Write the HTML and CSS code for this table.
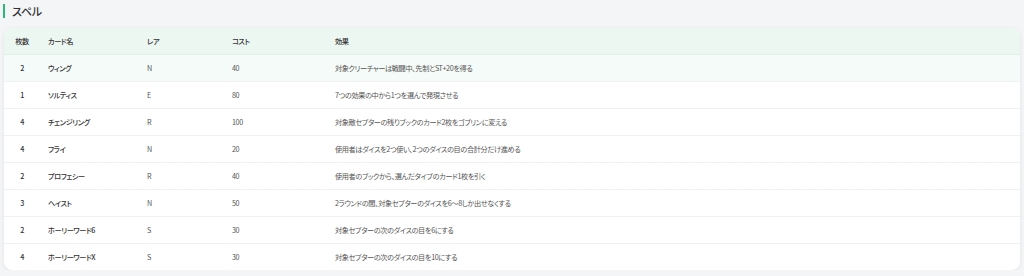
FILE: index.html
```html
<!DOCTYPE html>
<html lang="ja">
<head>
    <meta charset="UTF-8">
    <title>スペル</title>
    <link rel="stylesheet" href="styles.css">
</head>
<body>
    <div class="section">
        <h3 class="section-title">スペル</h3>
        <div class="card">
            <table class="spell-table">
                <colgroup>
                    <col class="col-count">
                    <col class="col-name">
                    <col class="col-rare">
                    <col class="col-cost">
                    <col>
                </colgroup>
                <thead>
                    <tr>
                        <th class="count">枚数</th>
                        <th>カード名</th>
                        <th>レア</th>
                        <th>コスト</th>
                        <th>効果</th>
                    </tr>
                </thead>
                <tbody>
                    <tr class="active">
                        <td class="count">2</td>
                        <td class="name">ウィング</td>
                        <td>N</td>
                        <td>40</td>
                        <td>対象クリーチャーは戦闘中、先制とST+20を得る</td>
                    </tr>
                    <tr>
                        <td class="count">1</td>
                        <td class="name">ソルティス</td>
                        <td>E</td>
                        <td>80</td>
                        <td>7つの効果の中から1つを選んで発現させる</td>
                    </tr>
                    <tr>
                        <td class="count">4</td>
                        <td class="name">チェンジリング</td>
                        <td>R</td>
                        <td>100</td>
                        <td>対象敵セプターの残りブックのカード2枚をゴブリンに変える</td>
                    </tr>
                    <tr>
                        <td class="count">4</td>
                        <td class="name">フライ</td>
                        <td>N</td>
                        <td>20</td>
                        <td>使用者はダイスを2つ使い、2つのダイスの目の合計分だけ進める</td>
                    </tr>
                    <tr>
                        <td class="count">2</td>
                        <td class="name">プロフェシー</td>
                        <td>R</td>
                        <td>40</td>
                        <td>使用者のブックから、選んだタイプのカード1枚を引く</td>
                    </tr>
                    <tr>
                        <td class="count">3</td>
                        <td class="name">ヘイスト</td>
                        <td>N</td>
                        <td>50</td>
                        <td>2ラウンドの間、対象セプターのダイスを6～8しか出せなくする</td>
                    </tr>
                    <tr>
                        <td class="count">2</td>
                        <td class="name">ホーリーワード6</td>
                        <td>S</td>
                        <td>30</td>
                        <td>対象セプターの次のダイスの目を6にする</td>
                    </tr>
                    <tr>
                        <td class="count">4</td>
                        <td class="name">ホーリーワードX</td>
                        <td>S</td>
                        <td>30</td>
                        <td>対象セプターの次のダイスの目を10にする</td>
                    </tr>
                </tbody>
            </table>
        </div>
    </div>
</body>
</html>
```

FILE: styles.css
```css
* {
    box-sizing: border-box;
}

body {
    margin: 0;
    padding: 0;
    background: #f4f5f7;
    font-family: "Noto Sans CJK JP", "Noto Sans", sans-serif;
    font-feature-settings: "palt";
    color: #333;
}

.section {
    padding: 4px 4px 0 4px;
}

.section-title {
    margin: 0 0 10px -1px;
    padding-left: 7px;
    border-left: 2px solid #2fb67c;
    font-size: 11px;
    font-weight: 500;
    line-height: 14px;
    letter-spacing: -0.3px;
    color: #333;
}

.card {
    background: #fff;
    border-radius: 8px;
    overflow: hidden;
    box-shadow: 0 1px 4px rgba(0, 0, 0, 0.08);
}

.spell-table {
    width: 100%;
    border-collapse: collapse;
    table-layout: fixed;
    font-size: 7.2px;
    letter-spacing: -0.4px;
    color: #555;
}

.col-count {
    width: 36px;
}

.col-name {
    width: 99px;
}

.col-rare {
    width: 85px;
}

.col-cost {
    width: 103px;
}

.spell-table th,
.spell-table td {
    text-align: left;
    padding: 0 8px;
    white-space: nowrap;
}

.spell-table th {
    height: 26px;
    background: #edf7f2;
    font-weight: 500;
    color: #333;
    border-bottom: 1px solid #e3f1ea;
}

.spell-table td {
    height: 27px;
    border-bottom: 1px solid #f0f1f3;
}

.spell-table tbody tr:last-child td {
    border-bottom: none;
}

.spell-table .count {
    text-align: center;
    font-weight: 500;
    color: #333;
}

.spell-table .name {
    font-weight: 500;
    color: #333;
}

.spell-table tr.active td {
    background: #f5fbf8;
}
```
